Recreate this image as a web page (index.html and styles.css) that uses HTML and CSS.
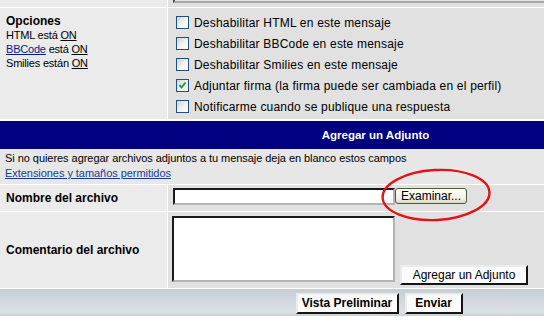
FILE: index.html
```html
<!DOCTYPE html>
<html lang="es">
  <head>
    <meta charset="UTF-8" />
    <title>Agregar un Adjunto</title>
    <link rel="stylesheet" href="styles.css">
  </head>
  <body>
    <div class="page">
      <form class="post-form">
        <div class="cell cell-label"></div>
        <div class="cell cell-field"><div class="message-edge"></div></div>

        <div class="cell cell-label options">
          <b class="options-title">Opciones</b>
          <span>HTML está <u>ON</u></span>
          <span><a href="#" class="bbcode-link">BBCode</a> está <u>ON</u></span>
          <span>Smilies están <u>ON</u></span>
        </div>
        <div class="cell cell-field option-list">
          <label class="option"><span class="check"></span>Deshabilitar HTML en este mensaje</label>
          <label class="option"><span class="check"></span>Deshabilitar BBCode en este mensaje</label>
          <label class="option"><span class="check"></span>Deshabilitar Smilies en este mensaje</label>
          <label class="option">
            <span class="check">
              <svg width="11" height="11" viewBox="0 0 11 11"><path d="M2.5 5 L4.5 7.5 L8.5 2.5" fill="none" stroke="#21a121" stroke-width="2"/></svg>
            </span>Adjuntar firma (la firma puede ser cambiada en el perfil)
          </label>
          <label class="option"><span class="check"></span>Notificarme cuando se publique una respuesta</label>
        </div>

        <div class="attach">
          <div class="cat-head">Agregar un Adjunto</div>
          <div class="attach-info">
            Si no quieres agregar archivos adjuntos a tu mensaje deja en blanco estos campos<br>
            <a href="#" class="rules-link">Extensiones y tamaños permitidos</a>
          </div>
        </div>

        <div class="cell cell-label field-name">Nombre del archivo</div>
        <div class="cell cell-field file-row">
          <input type="text" class="file-input" />
          <button type="button" class="xp-button">Examinar...</button>
        </div>

        <div class="cell cell-label field-name">Comentario del archivo</div>
        <div class="cell cell-field comment-row">
          <textarea class="comment-box"></textarea>
          <button type="button" class="flat-button add-button">Agregar un Adjunto</button>
        </div>

        <div class="cat-bottom">
          <button type="button" class="flat-button strong preview-button">Vista Preliminar</button>
          <button type="button" class="flat-button strong send-button">Enviar</button>
        </div>
      </form>

      <!-- red marker drawn over the browse button -->
      <svg class="highlight" width="120" height="60" viewBox="0 0 120 60">
        <ellipse cx="59" cy="29" rx="53.5" ry="25" fill="none" stroke="#e01414" stroke-width="2.4" transform="rotate(-3 59 29)"/>
      </svg>
    </div>
  </body>
</html>
```

FILE: styles.css
```css
* {
  box-sizing: border-box;
}

body {
  margin: 0;
  background: #fff;
  font-family: "Liberation Sans", Arial, sans-serif;
  font-size: 11px;
  color: #000;
  overflow: hidden;
}

.page {
  position: relative;
  width: 544px;
  height: 322px;
  overflow: hidden;
}

.post-form {
  display: grid;
  grid-template-columns: 167px 590px;
  grid-template-rows: 7px 111px 64px 26px 76px 27px;
  gap: 1px;
  width: 758px;
  margin: 0;
  background: #fff;
}

.cell-label {
  background: #ebebeb;
  padding-left: 6px;
}

.cell-field {
  background: #e1e1e1;
  padding-left: 5px;
}

.message-edge {
  height: 3px;
  border-left: 2px solid #4a4a4a;
  border-bottom: 2px solid #a9a9a9;
}

.options {
  display: flex;
  flex-direction: column;
  padding-top: 6px;
  line-height: 14px;
  letter-spacing: -0.2px;
}

.options-title {
  font-size: 12px;
  letter-spacing: 0;
}

.options u {
  color: #000;
}

.bbcode-link {
  color: #0a1a8c;
}

.option-list {
  padding: 4px 0 0 8px;
}

.option {
  display: flex;
  align-items: center;
  height: 21px;
  font-size: 12px;
  letter-spacing: 0.2px;
}

.check {
  display: flex;
  align-items: center;
  justify-content: center;
  width: 13px;
  height: 13px;
  margin-right: 5px;
  border: 1px solid #1c5180;
  background: linear-gradient(135deg, #d4d4ce 0%, #f4f4f0 55%, #fff 100%);
}

.attach {
  grid-column: 1 / -1;
  display: flex;
  flex-direction: column;
}

.cat-head {
  height: 29px;
  border-top: 1px solid #fff;
  padding-right: 7px;
  background: #000080;
  color: #fff;
  font-size: 11.5px;
  font-weight: bold;
  display: flex;
  align-items: center;
  justify-content: center;
}

.attach-info {
  flex: 1;
  padding: 2px 5px;
  line-height: 15px;
  letter-spacing: -0.05px;
  background: #e7e7e7;
}

.rules-link {
  color: #1c3a9a;
}

.field-name {
  display: flex;
  align-items: center;
  font-size: 12px;
  font-weight: bold;
}

.file-row {
  display: flex;
  align-items: flex-start;
  padding-top: 3px;
}

.file-input,
.comment-box {
  margin: 0;
  padding: 0;
  background: #fff;
  border: 2px solid;
  border-color: #1a1a1a #b4b4b4 #b4b4b4 #1a1a1a;
  outline: none;
}

.file-input {
  width: 222px;
  height: 17px;
}

.xp-button {
  width: 72px;
  height: 16px;
  margin-left: 0;
  padding: 0;
  border: 1px solid #4f5c3a;
  border-radius: 3px;
  background: linear-gradient(#fefefa 0%, #f1f0e6 70%, #d9d7c5 100%);
  font-family: "Liberation Sans", Arial, sans-serif;
  font-size: 12px;
  color: #000;
}

.comment-row {
  display: flex;
  align-items: flex-end;
  padding: 3px 0 3px 4px;
}

.comment-box {
  width: 223px;
  height: 66px;
  margin-bottom: 3px;
  resize: none;
}

.flat-button {
  height: 20px;
  padding: 0;
  background: #fbfbfb;
  border: 2px solid;
  border-color: #ececec #141414 #141414 #ececec;
  font-family: "Liberation Sans", Arial, sans-serif;
  font-size: 12px;
  color: #000;
}

.flat-button.strong {
  font-weight: bold;
  height: 21px;
}

.add-button {
  width: 128px;
  margin-left: 5px;
}

.preview-button {
  width: 103px;
}

.send-button {
  width: 58px;
}

.cat-bottom {
  grid-column: 1 / -1;
  display: flex;
  justify-content: center;
  align-items: center;
  gap: 6px;
  padding-top: 1px;
  background: linear-gradient(#c5cdd5 0%, #d3d9df 50%, #dde1e6 85%, #c8ced4 100%);
}

.highlight {
  position: absolute;
  left: 377px;
  top: 166px;
}
```
